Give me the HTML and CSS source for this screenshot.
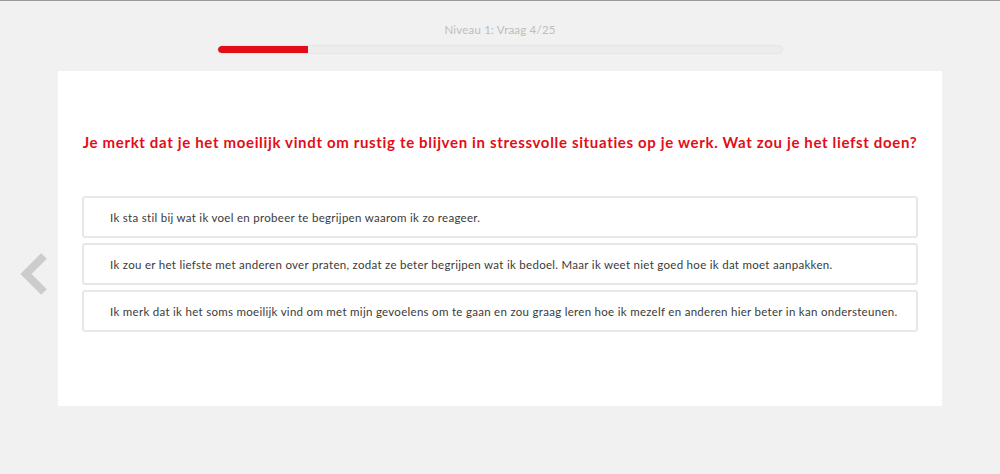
FILE: index.html
```html
<!DOCTYPE html>
<html lang="nl">
<head>
  <meta charset="UTF-8" />
  <meta name="viewport" content="width=device-width, initial-scale=1" />
  <title>Niveau 1 - Vraag 4/25</title>
  <link rel="stylesheet" href="styles.css">
</head>
<body>
<header class="progress-head">
  <p class="progress-label">Niveau 1: Vraag 4/25</p>
  <div class="progress-track">
    <div class="progress-fill" style="width: 16%"></div>
  </div>
</header>

<main class="quiz">
  <a href="#" class="prev" aria-label="Vorige vraag">
    <svg width="30" height="44" viewBox="0 0 30 44" aria-hidden="true">
      <path d="M25 4 L7 22 L25 40" fill="none" stroke="#cccccc" stroke-width="8" stroke-linejoin="miter"/>
    </svg>
  </a>

  <section class="card">
    <h1 class="question">Je merkt dat je het moeilijk vindt om rustig te blijven in stressvolle situaties op je werk. Wat zou je het liefst doen?</h1>
    <ul class="answers">
      <li class="answer">Ik sta stil bij wat ik voel en probeer te begrijpen waarom ik zo reageer.</li>
      <li class="answer">Ik zou er het liefste met anderen over praten, zodat ze beter begrijpen wat ik bedoel. Maar ik weet niet goed hoe ik dat moet aanpakken.</li>
      <li class="answer">Ik merk dat ik het soms moeilijk vind om met mijn gevoelens om te gaan en zou graag leren hoe ik mezelf en anderen hier beter in kan ondersteunen.</li>
    </ul>
  </section>
</main>
</body>
</html>
```

FILE: styles.css
```css
html, body {
  height: 100%;
}
body {
  font-family: 'Lato', 'Open Sans', sans-serif;
  margin: 0; padding: 0;
  background: #f1f1f1;
  color: #333;
  border-top: 1px solid #999;
  box-sizing: border-box;
}
.progress-head {
  width: 566px;
  margin: 0 auto;
  padding-top: 21px;
}
.progress-label {
  margin: 0;
  text-align: center;
  font-size: 11.5px;
  line-height: 16px;
  color: #bdbdbd;
  letter-spacing: 0.2px;
}
.progress-track {
  margin-top: 7px;
  height: 9px;
  background: #ececec;
  border: 1px solid #e6e6e6;
  border-radius: 5px;
  overflow: hidden;
  box-sizing: border-box;
}
.progress-fill {
  height: 100%;
  background: #e20d17;
  border-radius: 4px 0 0 4px;
}
.quiz {
  position: relative;
  margin-top: 17px;
}
.prev {
  position: absolute;
  left: 19px;
  top: 181px;
}
.card {
  width: 884px;
  margin: 0 auto;
  background: #fff;
  padding: 59px 24px 74px;
  box-sizing: border-box;
}
.question {
  margin: 0;
  text-align: center;
  color: #e20d17;
  font-size: 15px;
  line-height: 24px;
  font-weight: 700;
  letter-spacing: 0.66px;
}
.answers {
  list-style: none;
  margin: 42px 0 0;
  padding: 0;
  display: flex;
  flex-direction: column;
  gap: 5px;
}
.answer {
  border: 2px solid #e8e8e8;
  border-radius: 3px;
  padding: 0 8px 0 26px;
  height: 42px;
  display: flex;
  align-items: center;
  white-space: nowrap;
  font-size: 11.5px;
  color: #3a3a3a;
  letter-spacing: 0.29px;
  box-sizing: border-box;
}
```
